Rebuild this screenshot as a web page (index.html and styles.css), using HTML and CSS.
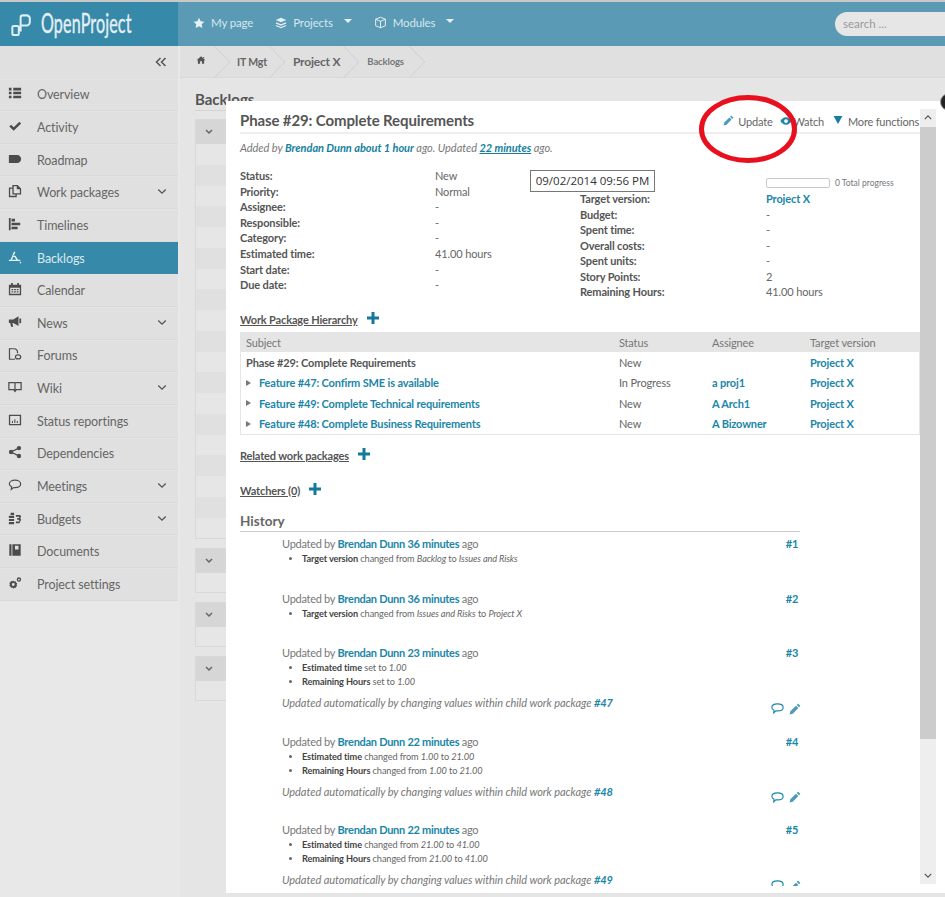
FILE: index.html
```html
<!DOCTYPE html>
<html lang="en">
<head>
<meta charset="utf-8">
<title>OpenProject</title>
<link rel="stylesheet" href="styles.css">
</head>
<body>
<header class="topbar">
  <div class="brand">
    <svg class="logo" viewBox="0 0 24 24"><path d="M1.500 21.500v-7a1.500 1.500 0 0 1 1.500-1.500h4a1.500 1.500 0 0 1 1.500 1.500v7a1.500 1.500 0 0 1-1.500 1.500H3a1.500 1.500 0 0 1-1.500-1.500zM10.500 19V4a2.500 2.500 0 0 1 2.500-2.500h4A3.500 3.500 0 0 1 20.500 5v4a3.500 3.500 0 0 1-3.500 3.500h-6.500"/></svg>
    <span class="brand-name">OpenProject</span>
  </div>
  <nav class="topnav">
    <a class="topnav-item"><svg class="ti" viewBox="0 0 16 16"><path d="M8 1l2.200 4.600 5 .7-3.600 3.500.9 5L8 12.400 3.500 14.800l.9-5L.8 6.300l5-.7z"/></svg>My page</a>
    <a class="topnav-item"><svg class="ti" viewBox="0 0 16 16"><path d="M8 1l7 3-7 3-7-3zM1.500 7L8 9.800 14.500 7l.5 1.500-7 3-7-3zM1.500 10.500L8 13.300l6.500-2.800.5 1.500-7 3-7-3z"/></svg>Projects<i class="caret"></i></a>
    <a class="topnav-item"><svg class="ti cube" viewBox="0 0 16 16"><path d="M8 1.500l6 2.500v8l-6 2.500L2 12V4zM2 4l6 2.500L14 4M8 6.500v8"/></svg>Modules<i class="caret"></i></a>
  </nav>
  <div class="search">search ...</div>
</header>

<div class="shell">
  <aside class="sidebar">
    <div class="collapse"><svg class="collapse-ico" viewBox="0 0 12 10"><path d="M5.500 1L1.500 5l4 4M10.500 1l-4 4 4 4"/></svg></div>
    <a class="side-item"><svg class="si" viewBox="0 0 16 16"><path d="M1 2h3v3H1zM6 2h9v3H6zM1 6.500h3v3H1zM6 6.500h9v3H6zM1 11h3v3H1zM6 11h9v3H6z"/></svg><span>Overview</span></a>
    <a class="side-item"><svg class="si" viewBox="0 0 16 16"><path d="M1.500 8.500l2-2 3 3L13 3l2 2-8.500 8.500z"/></svg><span>Activity</span></a>
    <a class="side-item"><svg class="si" viewBox="0 0 16 16"><path d="M1 3.500h9.500c2.500 0 4.500 2 4.500 4.500s-2 4.500-4.500 4.500H1z"/></svg><span>Roadmap</span></a>
    <a class="side-item"><svg class="si" viewBox="0 0 16 16"><path fill-rule="evenodd" d="M5 1h6l4 4v7H10v3H1V4h4zM6.500 2.500V10.500h7V6H10V2.500zM2.500 5.500v8h6V12H5V5.500z"/></svg><span>Work packages</span><svg class="chev" viewBox="0 0 12 8"><path d="M1.500 1.500L6 6l4.500-4.500"/></svg></a>
    <a class="side-item"><svg class="si" viewBox="0 0 16 16"><path d="M1 1h2v14H1zM4 2h4v3H4zM4 6.500h10v3H4zM4 11h7v3H4z"/></svg><span>Timelines</span></a>
    <a class="side-item active"><svg class="si" viewBox="0 0 16 16"><path d="M7 1.500l1.500 1.500L6 6.500l2.500 0 3 4.500H14v1.500H1V11h2zM4.500 11h5L7.500 8h-1.500zM13.500 13.500h1.500v1.500h-1.500z"/></svg><span>Backlogs</span></a>
    <a class="side-item"><svg class="si" viewBox="0 0 16 16"><path fill-rule="evenodd" d="M1 3h2.500V1h2v2h5V1h2v2H15v12H1zM2.500 6.500V13.500h11v-7zM4 8h2v1.500H4zM7 8h2v1.500H7zM10 8h2v1.500h-2zM4 10.500h2V12H4zM7 10.500h2V12H7zM10 10.500h2V12h-2z"/></svg><span>Calendar</span></a>
    <a class="side-item"><svg class="si" viewBox="0 0 16 16"><path d="M1 5h5l6-3.500v11L6 9H5l1 4.500H3.500L2.500 9H1zM13 4h2v5.500h-2z"/></svg><span>News</span><svg class="chev" viewBox="0 0 12 8"><path d="M1.500 1.500L6 6l4.500-4.500"/></svg></a>
    <a class="side-item"><svg class="si outline" viewBox="0 0 16 16"><path d="M8 14H1.700V2h5c2.500 0 4.300 2 4.300 5M11.500 9c1.700 0 3 1 3 2.300s-1.300 2.200-3 2.200c-1.700 0-3-1-3-2.200S9.800 9 11.500 9z"/></svg><span>Forums</span></a>
    <a class="side-item"><svg class="si outline" viewBox="0 0 16 16"><path d="M1 3h6a1 1 0 0 1 1 1 1 1 0 0 1 1-1h6v8H9.500L8 13l-1.500-2H1zM8 4v9"/></svg><span>Wiki</span><svg class="chev" viewBox="0 0 12 8"><path d="M1.500 1.500L6 6l4.500-4.500"/></svg></a>
    <a class="side-item"><svg class="si" viewBox="0 0 16 16"><path fill-rule="evenodd" d="M1 2h14v12H1zM2.500 3.500V12.500h11v-9zM4.500 9h1.200v2.500H4.500zM7.200 7h1.200v4.500H7.200zM10 9h1.200v2.500H10z"/></svg><span>Status reportings</span></a>
    <a class="side-item"><svg class="si" viewBox="0 0 16 16"><circle cx="3.500" cy="8" r="2.500"/><circle cx="12.500" cy="3.500" r="2.500"/><circle cx="12.500" cy="12.500" r="2.500"/><path d="M3 7.300l9-4.500.7 1.400-9 4.500zM3.700 7.300l9 4.500-.7 1.400-9-4.500z"/></svg><span>Dependencies</span></a>
    <a class="side-item"><svg class="si outline" viewBox="0 0 16 16"><path d="M8 2.500c3.500 0 6.500 1.800 6.500 4.300S11.500 11 8 11c-.8 0-1.500 0-2 .2L3.800 13l.3-3C2.500 9.200 1.500 8.100 1.500 6.800 1.500 4.300 4.500 2.500 8 2.500z"/></svg><span>Meetings</span><svg class="chev" viewBox="0 0 12 8"><path d="M1.500 1.500L6 6l4.500-4.500"/></svg></a>
    <a class="side-item"><svg class="si" viewBox="0 0 16 16"><path d="M3 2h4v2.500H3zM1 5.500h6V8H1zM1 9h6v2.500H1zM1 12.500h6V15H1zM9 4.500h5l1 2-1 1.500 1 2-1 2-1 2H9v-2h3.500l.5-1-.5-1H10.500V8h2l.5-1-.5-.5H9z"/></svg><span>Budgets</span><svg class="chev" viewBox="0 0 12 8"><path d="M1.500 1.500L6 6l4.500-4.500"/></svg></a>
    <a class="side-item"><svg class="si" viewBox="0 0 16 16"><path fill-rule="evenodd" d="M1.500 1.500h2.500v13H1.500zM5 1.500h9.500v13H5zM8 3v4.500h4V3z"/></svg><span>Documents</span></a>
    <a class="side-item"><svg class="si" viewBox="0 0 16 16"><path fill-rule="evenodd" d="M6 5l1 1.200 1.700-.2.500 1.400 1.300.9-.7 1.500.7 1.500-1.300.9-.5 1.400-1.700-.2L6 14.500l-1-1.400-1.700.2-.5-1.400L1.500 11l.7-1.500L1.500 8l1.300-.9.500-1.400L5 6zM6 8a1.700 1.700 0 1 0 0 3.400A1.700 1.700 0 0 0 6 8z"/><path fill-rule="evenodd" d="M12.500 1.500a2.500 2.500 0 1 1 0 5 2.500 2.500 0 0 1 0-5zM12.500 3a1 1 0 1 0 0 2 1 1 0 0 0 0-2z"/></svg><span>Project settings</span></a>
  </aside>

  <div class="main">
    <nav class="crumbs">
      <svg class="home" viewBox="0 0 16 16"><path d="M8 2l7 6.500h-2V14H9.500v-4h-3v4H3V8.500H1zM11 3h2v2.500l-2-2z"/></svg>
      <svg class="tip first" viewBox="0 0 16 33"><path d="M0 0l16 16.500L0 33"/></svg>
      <span class="crumb">IT Mgt</span>
      <svg class="tip" viewBox="0 0 16 33"><path d="M0 0l16 16.500L0 33"/></svg>
      <span class="crumb big">Project X</span>
      <svg class="tip" viewBox="0 0 16 33"><path d="M0 0l16 16.500L0 33"/></svg>
      <span class="crumb small">Backlogs</span>
      <svg class="tip" viewBox="0 0 16 33"><path d="M0 0l16 16.500L0 33"/></svg>
    </nav>
    <div class="page">
      <h1 class="page-title">Backlogs</h1>
      <div class="backlog">
        <div class="bl-head"><svg class="bl-chev" viewBox="0 0 8 6"><path d="M1 1l3 3 3-3"/></svg></div>
        <div class="bl-row"></div><div class="bl-row alt"></div><div class="bl-row"></div><div class="bl-row alt"></div><div class="bl-row"></div><div class="bl-row alt"></div><div class="bl-row"></div><div class="bl-row alt"></div><div class="bl-row"></div><div class="bl-row alt"></div><div class="bl-row"></div><div class="bl-row alt"></div><div class="bl-row"></div><div class="bl-row alt"></div><div class="bl-row"></div><div class="bl-row alt"></div><div class="bl-row"></div><div class="bl-row alt"></div><div class="bl-row"></div>
      </div>
      <div class="backlog">
        <div class="bl-head"><svg class="bl-chev" viewBox="0 0 8 6"><path d="M1 1l3 3 3-3"/></svg></div>
        <div class="bl-row"></div>
      </div>
      <div class="backlog">
        <div class="bl-head"><svg class="bl-chev" viewBox="0 0 8 6"><path d="M1 1l3 3 3-3"/></svg></div>
        <div class="bl-row"></div>
      </div>
      <div class="backlog">
        <div class="bl-head"><svg class="bl-chev" viewBox="0 0 8 6"><path d="M1 1l3 3 3-3"/></svg></div>
        <div class="bl-row"></div>
      </div>
    </div>
  </div>
</div>

<section class="modal">
  <div class="modal-body">
    <div class="wp-head">
      <h2 class="wp-title">Phase #29: Complete Requirements</h2>
      <div class="wp-actions">
        <a class="act update"><svg class="act-ico" viewBox="0 0 16 16"><path d="M12 .8l3.200 3.200L13.500 5.700 10.300 2.500zM9.300 3.500l3.200 3.200L5 14.200l-4.200 1 1-4.200z"/></svg>Update</a>
        <a class="act watch"><svg class="act-ico eye" viewBox="0 0 16 16"><path fill-rule="evenodd" d="M8 3c3.500 0 6 2.500 7.500 5-1.500 2.500-4 5-7.500 5S2 10.500.5 8C2 5.500 4.500 3 8 3zm0 2.500a2.500 2.500 0 1 0 0 5 2.500 2.500 0 0 0 0-5z"/></svg>Watch</a>
        <a class="act more"><svg class="act-ico tri" viewBox="0 0 10 9"><path d="M0 0h10L5 9z"/></svg>More functions</a>
      </div>
    </div>
    <p class="wp-sub">Added by <a class="lnk">Brendan Dunn</a> <a class="lnk">about 1 hour</a> ago. Updated <a class="lnk ul">22 minutes</a> ago.</p>

    <div class="attrs">
      <dl class="attr-col left">
        <dt>Status:</dt><dd>New</dd>
        <dt>Priority:</dt><dd>Normal</dd>
        <dt>Assignee:</dt><dd>-</dd>
        <dt>Responsible:</dt><dd>-</dd>
        <dt>Category:</dt><dd>-</dd>
        <dt>Estimated time:</dt><dd>41.00 hours</dd>
        <dt>Start date:</dt><dd>-</dd>
        <dt>Due date:</dt><dd>-</dd>
      </dl>
      <div class="attr-right">
        <div class="progress"><div class="bar"></div><span class="bar-label">0 Total progress</span></div>
        <dl class="attr-col right">
          <dt>Target version:</dt><dd><a class="lnk strong">Project X</a></dd>
          <dt>Budget:</dt><dd>-</dd>
          <dt>Spent time:</dt><dd>-</dd>
          <dt>Overall costs:</dt><dd>-</dd>
          <dt>Spent units:</dt><dd>-</dd>
          <dt>Story Points:</dt><dd>2</dd>
          <dt>Remaining Hours:</dt><dd>41.00 hours</dd>
        </dl>
      </div>
    </div>

    <div class="sec first-sec"><span class="sec-title">Work Package Hierarchy</span><svg class="plus" viewBox="0 0 12 12"><path d="M4.500 0h3v4.500H12v3H7.500V12h-3V7.500H0v-3h4.500z"/></svg></div>
    <div class="tbl">
      <div class="tr th"><span>Subject</span><span>Status</span><span>Assignee</span><span>Target version</span></div>
      <div class="tr"><span class="root">Phase #29: Complete Requirements</span><span>New</span><span></span><a class="lnk strong">Project X</a></div>
      <div class="tr"><span class="sub"><i class="arrow"></i><a class="lnk strong">Feature #47: Confirm SME is available</a></span><span>In Progress</span><a class="lnk strong">a proj1</a><a class="lnk strong">Project X</a></div>
      <div class="tr"><span class="sub"><i class="arrow"></i><a class="lnk strong">Feature #49: Complete Technical requirements</a></span><span>New</span><a class="lnk strong">A Arch1</a><a class="lnk strong">Project X</a></div>
      <div class="tr"><span class="sub"><i class="arrow"></i><a class="lnk strong">Feature #48: Complete Business Requirements</a></span><span>New</span><a class="lnk strong">A Bizowner</a><a class="lnk strong">Project X</a></div>
    </div>
    <div class="sec related"><span class="sec-title">Related work packages</span><svg class="plus" viewBox="0 0 12 12"><path d="M4.500 0h3v4.500H12v3H7.500V12h-3V7.500H0v-3h4.500z"/></svg></div>
    <div class="sec watchers"><span class="sec-title">Watchers (0)</span><svg class="plus" viewBox="0 0 12 12"><path d="M4.500 0h3v4.500H12v3H7.500V12h-3V7.500H0v-3h4.500z"/></svg></div>

    <div class="history">
      <h3 class="hist-title">History</h3>
      <article class="entry e1">
        <div class="entry-head"><span>Updated by <a class="lnk strong">Brendan Dunn</a> <a class="lnk strong">36 minutes</a> ago</span><a class="lnk strong">#1</a></div>
        <ul class="changes"><li><b>Target version</b> changed from <em>Backlog</em> to <em>Issues and Risks</em></li></ul>
      </article>
      <article class="entry e1">
        <div class="entry-head"><span>Updated by <a class="lnk strong">Brendan Dunn</a> <a class="lnk strong">36 minutes</a> ago</span><a class="lnk strong">#2</a></div>
        <ul class="changes"><li><b>Target version</b> changed from <em>Issues and Risks</em> to <em>Project X</em></li></ul>
      </article>
      <article class="entry e2">
        <div class="entry-head"><span>Updated by <a class="lnk strong">Brendan Dunn</a> <a class="lnk strong">23 minutes</a> ago</span><a class="lnk strong">#3</a></div>
        <ul class="changes"><li><b>Estimated time</b> set to <em>1.00</em></li><li><b>Remaining Hours</b> set to <em>1.00</em></li></ul>
        <p class="auto">Updated automatically by changing values within child work package <a class="lnk strong">#47</a></p>
        <div class="entry-tools"><svg class="tool" viewBox="0 0 16 16"><path d="M8 3c3.500 0 6 1.500 6 3.800S11.500 10.500 8 10.500c-.7 0-1.300 0-1.800-.1L4 12.500l.2-2.800C2.800 9 2 8 2 6.800 2 4.500 4.500 3 8 3z"/></svg><svg class="tool pen" viewBox="0 0 16 16"><path d="M12 .8l3.200 3.200L13.500 5.700 10.300 2.500zM9.300 3.500l3.200 3.200L5 14.200l-4.200 1 1-4.200z"/></svg></div>
      </article>
      <article class="entry e2">
        <div class="entry-head"><span>Updated by <a class="lnk strong">Brendan Dunn</a> <a class="lnk strong">22 minutes</a> ago</span><a class="lnk strong">#4</a></div>
        <ul class="changes"><li><b>Estimated time</b> changed from <em>1.00</em> to <em>21.00</em></li><li><b>Remaining Hours</b> changed from <em>1.00</em> to <em>21.00</em></li></ul>
        <p class="auto">Updated automatically by changing values within child work package <a class="lnk strong">#48</a></p>
        <div class="entry-tools"><svg class="tool" viewBox="0 0 16 16"><path d="M8 3c3.500 0 6 1.500 6 3.800S11.500 10.500 8 10.500c-.7 0-1.300 0-1.800-.1L4 12.500l.2-2.800C2.800 9 2 8 2 6.800 2 4.500 4.500 3 8 3z"/></svg><svg class="tool pen" viewBox="0 0 16 16"><path d="M12 .8l3.200 3.200L13.500 5.700 10.300 2.500zM9.300 3.500l3.200 3.200L5 14.200l-4.200 1 1-4.200z"/></svg></div>
      </article>
      <article class="entry e2">
        <div class="entry-head"><span>Updated by <a class="lnk strong">Brendan Dunn</a> <a class="lnk strong">22 minutes</a> ago</span><a class="lnk strong">#5</a></div>
        <ul class="changes"><li><b>Estimated time</b> changed from <em>21.00</em> to <em>41.00</em></li><li><b>Remaining Hours</b> changed from <em>21.00</em> to <em>41.00</em></li></ul>
        <p class="auto">Updated automatically by changing values within child work package <a class="lnk strong">#49</a></p>
        <div class="entry-tools"><svg class="tool" viewBox="0 0 16 16"><path d="M8 3c3.500 0 6 1.500 6 3.800S11.500 10.500 8 10.500c-.7 0-1.300 0-1.800-.1L4 12.500l.2-2.800C2.800 9 2 8 2 6.800 2 4.500 4.500 3 8 3z"/></svg><svg class="tool pen" viewBox="0 0 16 16"><path d="M12 .8l3.200 3.200L13.500 5.700 10.300 2.500zM9.300 3.500l3.200 3.200L5 14.200l-4.200 1 1-4.200z"/></svg></div>
      </article>
    </div>
  </div>
  <div class="scrollbar">
    <svg class="sb-arrow" viewBox="0 0 10 6"><path d="M1 5l4-4 4 4"/></svg>
    <div class="sb-thumb"></div>
    <svg class="sb-arrow down" viewBox="0 0 10 6"><path d="M1 1l4 4 4-4"/></svg>
  </div>
</section>

<div class="close-dot"></div>
<div class="tooltip">09/02/2014 09:56 PM</div>
<svg class="annot" viewBox="0 0 98 68"><ellipse cx="49" cy="34" rx="46.500" ry="31.500"/></svg>
</body>
</html>
```
FILE: styles.css
```css
* { box-sizing: border-box; }
html, body { margin: 0; height: 897px; overflow: hidden; }
body { font-family: Lato, "Open Sans", sans-serif; font-size: 12px; color: #555; background: #e5e5e5; }
a { color: inherit; text-decoration: none; }
h1, h2, h3, p, ul, dl, dd { margin: 0; padding: 0; }

.topbar { height: 46px; border-top: 2px solid #c8c8c8; display: flex; align-items: center; background: #5a9ab5; }
.brand { width: 178px; height: 44px; background: #3689a8; display: flex; align-items: center; padding-left: 11px; gap: 8px; flex: none; }
.logo { width: 22px; height: 22px; fill: none; stroke: #dfeef4; stroke-width: 2.200; margin-top: 2px; }
.brand-name { display: block; color: #e4f0f5; font-size: 26px; line-height: 26px; width: 90px; margin-top: -2px; white-space: nowrap; transform: scaleX(.62); transform-origin: left center; letter-spacing: .2px; -webkit-text-stroke: .4px #e4f0f5; }
.topnav { display: flex; padding-left: 15px; padding-bottom: 3px; gap: 22px; flex: 1; }
.topnav-item { display: flex; align-items: center; color: #d6e6ed; font-size: 11.500px; letter-spacing: -.15px; gap: 6px; }
.ti { width: 12px; height: 12px; fill: #e6f1f5; }
.ti.cube { fill: none; stroke: #e6f1f5; stroke-width: 1.200; width: 13px; height: 13px; }
.caret { width: 0; height: 0; border: 4px solid transparent; border-top-color: #e6f1f5; border-bottom: 0; margin-left: 5px; margin-top: -3px; }
.search { width: 130px; height: 24px; margin-right: -20px; background: #e6e6e6; border-radius: 12px; color: #999; font-size: 11.500px; line-height: 24px; padding-left: 8px; flex: none; }

.shell { display: flex; height: 851px; }
.sidebar { width: 180px; flex: none; background: #e8e8e8; }
.collapse { width: 178px; height: 32.500px; background: #e0e0e0; display: flex; align-items: center; justify-content: flex-end; padding-right: 11px; }
.collapse-ico { width: 12px; height: 10px; fill: none; stroke: #555; stroke-width: 1.500; }
.side-item { width: 178px; height: 32.650px; display: flex; align-items: center; background: #e0e0e0; border-bottom: 1px solid #d9d9d9; border-top: 1px solid #e4e4e4; color: #666; font-size: 12.500px; letter-spacing: -.1px; padding-left: 8px; }
.side-item span { margin-left: 15px; flex: 1; }
.si { width: 14px; height: 14px; fill: #4c4c4c; flex: none; margin-top: -3px; }
.si.outline { fill: none; stroke: #4c4c4c; stroke-width: 1.400; }
.side-item.active { background: #3689a8; color: #d9eaf1; border-color: #3689a8; }
.side-item.active .si { fill: #e6f1f5; }
.chev { width: 10px; height: 7px; fill: none; stroke: #555; stroke-width: 1.600; margin-right: 11px; margin-top: -2px; }

.main { flex: 1; min-width: 0; }
.crumbs { height: 32px; background: #e0e0e0; border-bottom: 1px solid #dadada; display: flex; align-items: center; padding-left: 16px; color: #666; font-size: 10.500px; letter-spacing: -.15px; font-weight: 700; }
.home { width: 10px; height: 10px; fill: #555; margin-top: -4px; flex: none; }
.tip { width: 16px; height: 32px; fill: none; stroke: #d0d0d0; stroke-width: 1; flex: none; }
.tip.first { margin-left: 8px; }
.crumb { margin: 0 2px 0 7px; }
.crumb.big { font-size: 12px; letter-spacing: -.2px; margin: 0 3px 0 8px; }
.crumb.small { font-size: 9.500px; margin: 0 5px 0 8px; color: #777; }

.page { padding: 12px 0 0 15px; }
.page-title { font-size: 15px; line-height: 19px; color: #555; font-weight: 700; height: 21px; border-bottom: 1px solid #d4d4d4; margin-bottom: 8px; }
.backlog { border: 1px solid #d8d8d8; border-right: 0; margin-bottom: 9px; background: #e6e6e6; }
.bl-head { height: 24px; background: #d6d6d6; display: flex; align-items: center; padding-left: 9px; }
.bl-chev { width: 8px; height: 6px; fill: none; stroke: #666; stroke-width: 1.500; }
.bl-row { height: 20.750px; background: #e6e6e6; }
.bl-row.alt { background: #e0e0e0; }
.bl-head + .bl-row:last-child { height: 19px; }

.modal { position: absolute; left: 226px; top: 101px; width: 719px; height: 792px; background: #fff; overflow: hidden; }
.modal-body { width: 694px; padding: 0 0 0 14px; height: 785px; overflow: hidden; }
.wp-head { height: 33px; display: flex; align-items: flex-end; justify-content: space-between; border-bottom: 2px solid #eee; padding-bottom: 2px; width: 680px; }
.wp-title { font-size: 15px; letter-spacing: -.12px; line-height: 20px; font-weight: 700; color: #555; }
.wp-actions { display: flex; gap: 9px; font-size: 11px; letter-spacing: -.2px; color: #666; line-height: 18px; margin-bottom: -1px; margin-right: 1px; }
.act { display: flex; align-items: center; gap: 4px; white-space: nowrap; }
.update { margin-right: -2px; }
.act-ico { width: 11px; height: 11px; fill: #4d9ab8; stroke: none; margin-top: -3px; }
.eye { fill: #1e86a8; width: 12px; height: 12px; }
.tri { width: 10px; height: 8px; fill: #147fa1; margin-right: 1px; margin-top: -4px; }
.watch { gap: 2px; }
.wp-sub { font-style: italic; font-size: 11px; letter-spacing: -.05px; color: #777; line-height: 14px; margin-top: 7px; }
.lnk { color: #1a86a9; }
.wp-sub .lnk { font-weight: 700; color: #147fa1; }
.wp-sub .lnk.ul { text-decoration: underline; }
.strong { font-weight: 700; }

.attrs { display: flex; margin-top: 13px; height: 136px; }
.attr-col { display: grid; font-size: 11px; letter-spacing: -.13px; line-height: 15.600px; }
.attr-col dt { font-weight: 700; color: #555; }
.attr-col dd { color: #666; }
.attr-col.left { grid-template-columns: 195px 145px; width: 340px; grid-auto-rows: 15.600px; }
.attr-col.right { grid-template-columns: 186px 120px; grid-auto-rows: 15.550px; }
.progress { height: 23px; display: flex; align-items: center; margin-left: 186px; gap: 5px; padding-top: 7px; }
.bar { width: 64px; height: 10px; border: 1px solid #c8c8c8; border-radius: 2px; }
.bar-label { font-size: 8.500px; color: #777; }

.sec { display: flex; align-items: center; font-size: 11px; letter-spacing: -.15px; font-weight: 700; color: #555; }
.sec-title { text-decoration: underline; }
.plus { width: 12px; height: 12px; fill: #14799c; margin-left: 9px; margin-top: -2px; }
.first-sec { margin-top: 6px; height: 18px; }
.tbl { width: 680px; border: 1px solid #e6e6e6; border-top: 0; margin-top: 4px; font-size: 11px; letter-spacing: -.15px; height: 103px; }
.tr { display: grid; grid-template-columns: 373px 93px 98px 1fr; height: 20.300px; align-items: center; color: #666; padding-left: 5px; padding-top: 1px; }
.th { background: #e5e5e5; color: #777; height: 20px; margin-left: -1px; padding-left: 6px; }
.root { font-weight: 700; color: #555; }
.sub { display: flex; align-items: center; }
.arrow { width: 0; height: 0; border: 3px solid transparent; border-left: 5px solid #777; border-right: 0; margin-right: 8px; }
.related { margin-top: 11px; height: 18px; }
.watchers { margin-top: 17px; height: 18px; }

.history { width: 560px; margin-top: 13px; }
.hist-title { font-size: 13.500px; line-height: 18px; font-weight: 700; color: #666; border-bottom: 1px solid #ccc; height: 20px; }
.entry { padding: 4px 2px 0 42px; position: relative; }
.entry.e1 { height: 54.500px; }
.entry.e2 { height: 88.500px; }
.entry-head { display: flex; justify-content: space-between; font-size: 11px; letter-spacing: -.28px; line-height: 15px; color: #777; }
.changes { list-style: disc; padding-left: 20px; font-size: 9.200px; letter-spacing: -.1px; line-height: 14px; color: #666; margin-top: 1px; }
.changes b { color: #444; }
.auto { font-style: italic; font-size: 11px; letter-spacing: -.05px; line-height: 15px; color: #777; margin-top: 6px; }
.entry-tools { position: absolute; right: -1px; top: 60px; display: flex; gap: 4px; align-items: center; }
.tool { width: 15px; height: 15px; fill: none; stroke: #1a86a9; stroke-width: 1.200; }
.tool.pen { width: 12px; height: 12px; fill: #4d9ab8; stroke: none; }

.scrollbar { position: absolute; left: 694px; top: 8px; width: 16px; height: 775px; background: #eee; display: flex; flex-direction: column; }
.sb-arrow { width: 8px; height: 5px; margin: 6px auto 7px; fill: none; stroke: #555; stroke-width: 1.500; flex: none; }
.sb-arrow.down { margin: auto auto 6px; }
.sb-thumb { height: 612px; background: #ccc; flex: none; }

.close-dot { position: absolute; left: 940px; top: 93px; width: 18px; height: 18px; border-radius: 50%; background: #222; border: 1px solid #999; }
.tooltip { position: absolute; left: 530px; top: 170px; width: 125px; height: 22px; background: #fff; border: 1px solid #777; font-family: "Open Sans", sans-serif; font-size: 11.500px; line-height: 20px; color: #333; text-align: center; white-space: nowrap; }
.annot { position: absolute; left: 699px; top: 95px; width: 98px; height: 68px; fill: none; stroke: #e8101f; stroke-width: 5; }
```
